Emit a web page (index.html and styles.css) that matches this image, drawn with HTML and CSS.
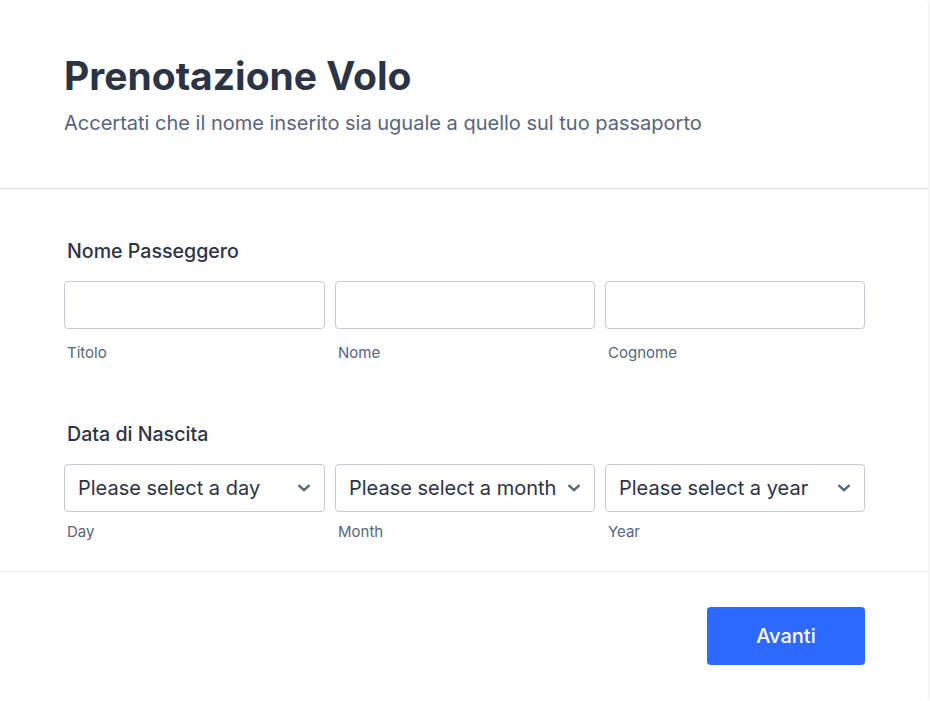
FILE: index.html
```html
<!DOCTYPE html>
<html lang="it">
<head>
    <meta charset="UTF-8">
    <meta name="viewport" content="width=device-width, initial-scale=1.0">
    <title>Prenotazione Volo</title>
    <link rel="stylesheet" href="styles.css">
</head>
<body>

    <div class="card">
        <div class="header">
            <h1>Prenotazione Volo</h1>
            <p class="subtitle">Accertati che il nome inserito sia uguale a quello sul tuo passaporto</p>
        </div>

        <div class="section">
            <div class="field">
                <label class="field-label">Nome Passeggero</label>
                <div class="row">
                    <div class="col">
                        <input type="text" class="text-input">
                        <span class="sublabel">Titolo</span>
                    </div>
                    <div class="col">
                        <input type="text" class="text-input">
                        <span class="sublabel">Nome</span>
                    </div>
                    <div class="col">
                        <input type="text" class="text-input">
                        <span class="sublabel">Cognome</span>
                    </div>
                </div>
            </div>

            <div class="field">
                <label class="field-label">Data di Nascita</label>
                <div class="row">
                    <div class="col">
                        <div class="select">
                            <span>Please select a day</span>
                            <svg class="chevron" width="14" height="8" viewBox="0 0 14 8"><path d="M1.5 1.2 L7 6.2 L12.5 1.2" fill="none" stroke="#57647e" stroke-width="2.4"/></svg>
                        </div>
                        <span class="sublabel">Day</span>
                    </div>
                    <div class="col">
                        <div class="select">
                            <span>Please select a month</span>
                            <svg class="chevron" width="14" height="8" viewBox="0 0 14 8"><path d="M1.5 1.2 L7 6.2 L12.5 1.2" fill="none" stroke="#57647e" stroke-width="2.4"/></svg>
                        </div>
                        <span class="sublabel">Month</span>
                    </div>
                    <div class="col">
                        <div class="select">
                            <span>Please select a year</span>
                            <svg class="chevron" width="14" height="8" viewBox="0 0 14 8"><path d="M1.5 1.2 L7 6.2 L12.5 1.2" fill="none" stroke="#57647e" stroke-width="2.4"/></svg>
                        </div>
                        <span class="sublabel">Year</span>
                    </div>
                </div>
            </div>
        </div>

        <div class="footer">
            <button type="button" class="next-btn">Avanti</button>
        </div>
    </div>

</body>
</html>
```

FILE: styles.css
```css
body {
    margin: 0;
    background: #fff;
    font-family: Inter, "Noto Sans", sans-serif;
    color: #2c3345;
}
.card {
    width: 928px;
    min-height: 701px;
    background: #fff;
    border-right: 1px solid #f1f1f4;
    border-radius: 0 4px 4px 0;
}
.header {
    padding: 52px 64px 0;
    height: 136px;
    border-bottom: 1px solid #d8dae9;
}
h1 {
    margin: 0;
    font-size: 39px;
    font-weight: 700;
    line-height: 48px;
    color: #2c3345;
}
.subtitle {
    margin: 9px 0 0;
    font-size: 20px;
    line-height: 28px;
    color: #57647e;
}
.section {
    padding: 50px 63px 30px 64px;
    display: flex;
    flex-direction: column;
    gap: 60px;
    border-bottom: 1px solid #ecedf3;
}
.field-label {
    display: block;
    padding-left: 3px;
    font-size: 19.6px;
    font-weight: 500;
    line-height: 24px;
    margin-bottom: 18px;
}
.row {
    display: grid;
    grid-template-columns: 261px 260px 260px;
    gap: 10px;
}
.col {
    display: flex;
    flex-direction: column;
}
.text-input, .select {
    box-sizing: border-box;
    width: 100%;
    height: 48px;
    border: 1px solid #c3cad8;
    border-radius: 4px;
    background: #fff;
}
.select {
    display: flex;
    align-items: center;
    justify-content: space-between;
    padding: 0 13px 0 13px;
    font-size: 20px;
    color: #2c3345;
}
.select + .sublabel {
    margin-top: 11px;
}
.chevron {
    flex-shrink: 0;
}
.sublabel {
    padding-left: 3px;
    margin-top: 15px;
    font-size: 15px;
    line-height: 18px;
    color: #57647e;
}
.footer {
    display: flex;
    justify-content: flex-end;
    padding: 35px 63px 35px 64px;
}
.next-btn {
    width: 158px;
    height: 58px;
    border: none;
    border-radius: 4px;
    background: #2e69ff;
    color: #fff;
    font-family: Inter, "Noto Sans", sans-serif;
    font-size: 20px;
    font-weight: 500;
    cursor: pointer;
}
```
